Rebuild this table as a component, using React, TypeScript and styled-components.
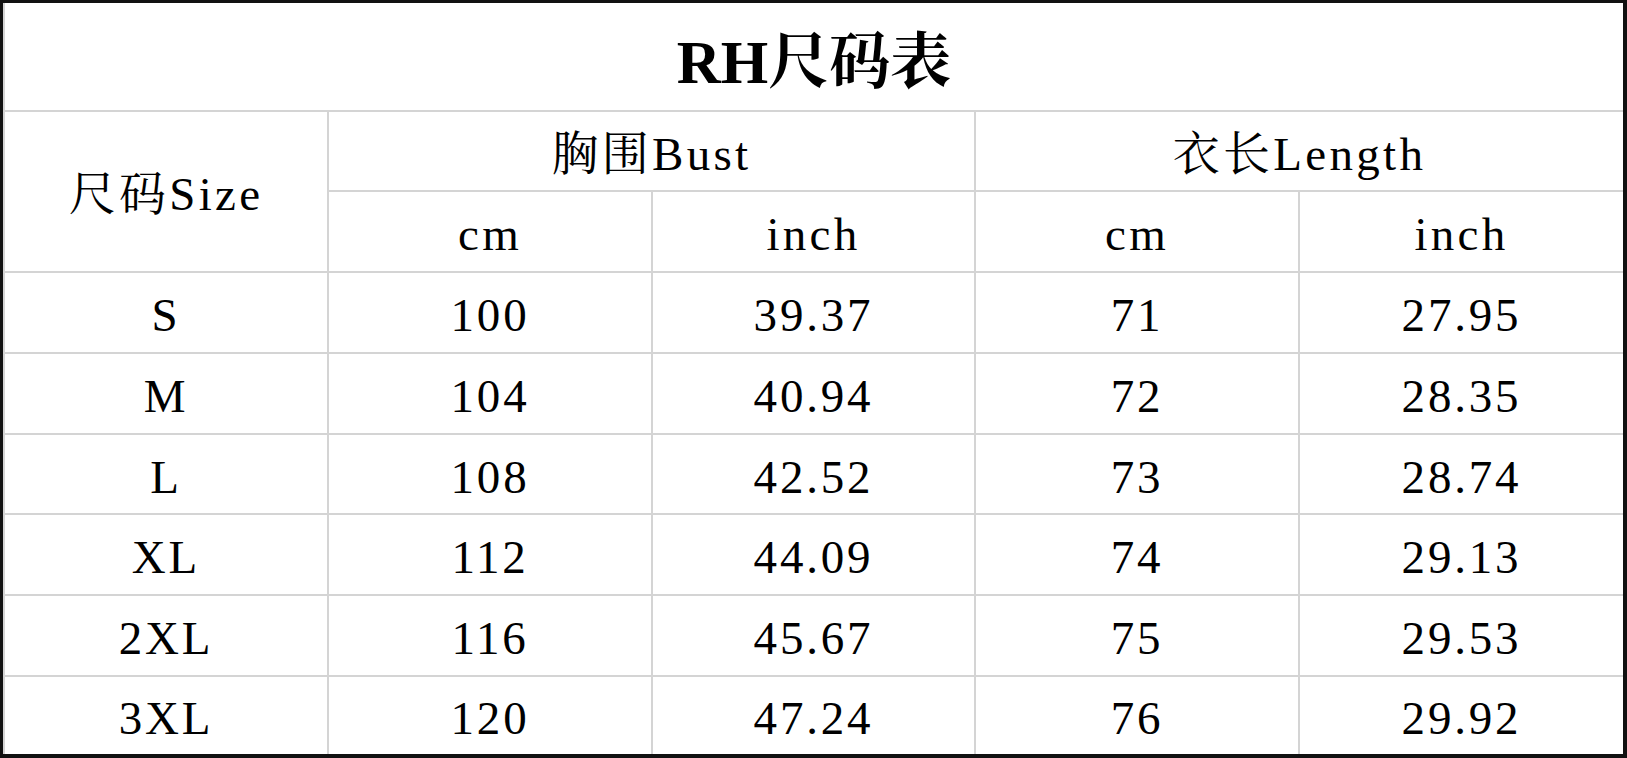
import React from 'react';
import styled, { createGlobalStyle } from 'styled-components';

const GlobalStyle = createGlobalStyle`
  html, body {
    margin: 0;
    padding: 0;
    background: #ffffff;
  }
`;

const SERIF = `"Liberation Serif", "Noto Serif CJK SC", "Noto Sans CJK SC", serif`;

const Frame = styled.div`
  width: 1627px;
  height: 758px;
  box-sizing: border-box;
  border: 3px solid #111111;
  border-bottom-width: 4px;
  border-right-width: 4px;
  background: #ffffff;
  overflow: hidden;
`;

const Table = styled.table`
  width: 100%;
  border-collapse: collapse;
  table-layout: fixed;
  font-family: ${SERIF};
  color: #000000;
`;

const Row = styled.tr<{ $h: number }>`
  height: ${(p) => p.$h}px;
`;

const Cell = styled.td<{ $wide?: boolean }>`
  border: 2px solid #d4d4d4;
  padding: 0;
  padding-top: 6px;
  text-align: center;
  vertical-align: middle;
  font-size: 47px;
  font-weight: 400;
  letter-spacing: ${(p) => (p.$wide ? '0.07em' : '0.06em')};
  white-space: nowrap;
  line-height: 1;
`;

const TitleCell = styled.td`
  border: 2px solid #d4d4d4;
  border-top: none;
  padding: 12px 0 0;
  text-align: center;
  vertical-align: middle;
  font-size: 61px;
  font-weight: 700;
  line-height: 1;
`;

const Col = styled.col<{ $w: number }>`
  width: ${(p) => p.$w}px;
`;

const rows = [
  ['S', '100', '39.37', '71', '27.95'],
  ['M', '104', '40.94', '72', '28.35'],
  ['L', '108', '42.52', '73', '28.74'],
  ['XL', '112', '44.09', '74', '29.13'],
  ['2XL', '116', '45.67', '75', '29.53'],
  ['3XL', '120', '47.24', '76', '29.92'],
];

const rowHeights = [81, 81, 80, 81, 81, 79];

export default function App() {
  return (
    <>
      <GlobalStyle />
      <Frame>
        <Table>
          <colgroup>
            <Col $w={324} />
            <Col $w={324} />
            <Col $w={323} />
            <Col $w={324} />
            <Col $w={325} />
          </colgroup>
          <tbody>
            <Row $h={108}>
              <TitleCell colSpan={5}>RH尺码表</TitleCell>
            </Row>
            <Row $h={80}>
              <Cell rowSpan={2} $wide>尺码Size</Cell>
              <Cell colSpan={2} $wide>胸围Bust</Cell>
              <Cell colSpan={2} $wide>衣长Length</Cell>
            </Row>
            <Row $h={81}>
              <Cell $wide>cm</Cell>
              <Cell $wide>inch</Cell>
              <Cell $wide>cm</Cell>
              <Cell $wide>inch</Cell>
            </Row>
            {rows.map((r, i) => (
              <Row key={r[0]} $h={rowHeights[i]}>
                {r.map((v, j) => (
                  <Cell key={j}>{v}</Cell>
                ))}
              </Row>
            ))}
          </tbody>
        </Table>
      </Frame>
    </>
  );
}
